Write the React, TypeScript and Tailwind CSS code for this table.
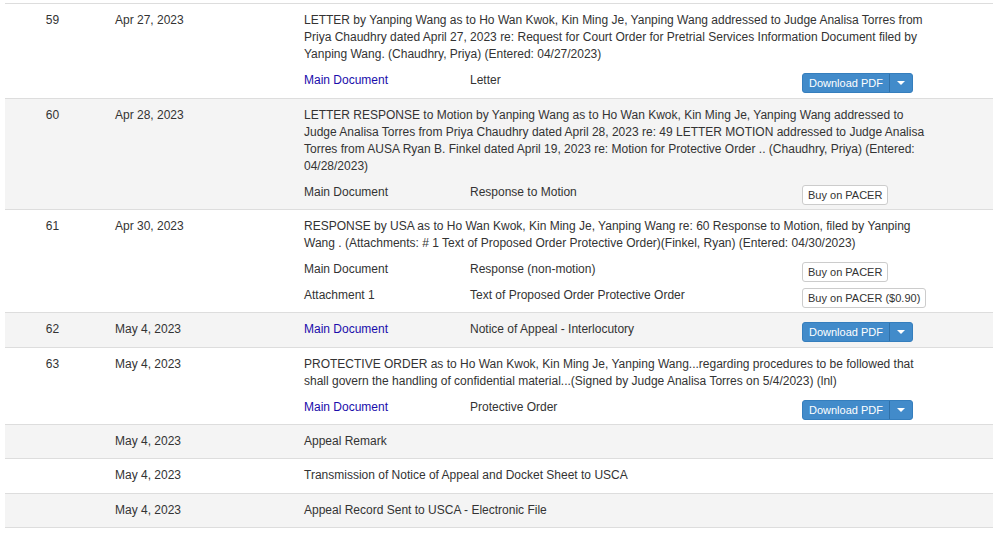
import React from 'react';

type Doc = {
  label: string;
  link?: boolean;
  desc: string;
  action: 'download' | 'buy' | 'buyPrice';
};

type Entry = {
  num?: string;
  date: string;
  text?: string;
  docs?: Doc[];
};

const entries: Entry[] = [
  {
    num: '59',
    date: 'Apr 27, 2023',
    text:
      'LETTER by Yanping Wang as to Ho Wan Kwok, Kin Ming Je, Yanping Wang addressed to Judge Analisa Torres from Priya Chaudhry dated April 27, 2023 re: Request for Court Order for Pretrial Services Information Document filed by Yanping Wang. (Chaudhry, Priya) (Entered: 04/27/2023)',
    docs: [{ label: 'Main Document', link: true, desc: 'Letter', action: 'download' }],
  },
  {
    num: '60',
    date: 'Apr 28, 2023',
    text:
      'LETTER RESPONSE to Motion by Yanping Wang as to Ho Wan Kwok, Kin Ming Je, Yanping Wang addressed to Judge Analisa Torres from Priya Chaudhry dated April 28, 2023 re: 49 LETTER MOTION addressed to Judge Analisa Torres from AUSA Ryan B. Finkel dated April 19, 2023 re: Motion for Protective Order .. (Chaudhry, Priya) (Entered: 04/28/2023)',
    docs: [{ label: 'Main Document', desc: 'Response to Motion', action: 'buy' }],
  },
  {
    num: '61',
    date: 'Apr 30, 2023',
    text:
      'RESPONSE by USA as to Ho Wan Kwok, Kin Ming Je, Yanping Wang re: 60 Response to Motion, filed by Yanping Wang . (Attachments: # 1 Text of Proposed Order Protective Order)(Finkel, Ryan) (Entered: 04/30/2023)',
    docs: [
      { label: 'Main Document', desc: 'Response (non-motion)', action: 'buy' },
      { label: 'Attachment 1', desc: 'Text of Proposed Order Protective Order', action: 'buyPrice' },
    ],
  },
  {
    num: '62',
    date: 'May 4, 2023',
    docs: [{ label: 'Main Document', link: true, desc: 'Notice of Appeal - Interlocutory', action: 'download' }],
  },
  {
    num: '63',
    date: 'May 4, 2023',
    text:
      'PROTECTIVE ORDER as to Ho Wan Kwok, Kin Ming Je, Yanping Wang...regarding procedures to be followed that shall govern the handling of confidential material...(Signed by Judge Analisa Torres on 5/4/2023) (lnl)',
    docs: [{ label: 'Main Document', link: true, desc: 'Protective Order', action: 'download' }],
  },
  { date: 'May 4, 2023', text: 'Appeal Remark' },
  { date: 'May 4, 2023', text: 'Transmission of Notice of Appeal and Docket Sheet to USCA' },
  { date: 'May 4, 2023', text: 'Appeal Record Sent to USCA - Electronic File' },
];

function DownloadButton() {
  return (
    <div className="mt-px flex h-5 rounded-[3px] border border-[#357ebd] bg-[#428bca] text-[11px] text-white">
      <span className="px-[6px] leading-[18px]">Download PDF</span>
      <span className="flex w-[23px] items-center justify-center border-l border-[#3071a9]">
        <span className="h-0 w-0 border-x-[4px] border-t-[4px] border-x-transparent border-t-white" />
      </span>
    </div>
  );
}

function BuyButton({ price }: { price?: string }) {
  return (
    <div className="mt-px h-5 rounded-[3px] border border-[#cccccc] bg-white px-[5px] text-[11px] leading-[18px] text-[#333333]">
      Buy on PACER{price ? ` (${price})` : ''}
    </div>
  );
}

function DocRow({ doc }: { doc: Doc }) {
  return (
    <div className="flex h-[25.5px] items-start">
      <span className={`w-[166px] ${doc.link ? 'text-[#1a0dab]' : ''}`}>{doc.label}</span>
      <span className="w-[332px]">{doc.desc}</span>
      {doc.action === 'download' && <DownloadButton />}
      {doc.action === 'buy' && <BuyButton />}
      {doc.action === 'buyPrice' && <BuyButton price="$0.90" />}
    </div>
  );
}

export default function App() {
  return (
    <div
      className="min-h-[539px] bg-white pt-[3px] pl-[5px] text-[12px] leading-[17px] text-[#333333]"
      style={{ fontFamily: '"Liberation Sans", Arial, sans-serif' }}
    >
      <div className="border-t border-[#dddddd]">
        {entries.map((e, i) => (
          <div
            key={i}
            className={`flex border-b border-[#dddddd] ${i % 2 === 1 ? 'bg-[#f4f4f4]' : 'bg-white'}`}
          >
            <div className="w-[95px] shrink-0 pt-2 text-center">{e.num}</div>
            <div className="w-[196px] shrink-0 pt-2 pl-[15px]">{e.date}</div>
            <div className={`flex-1 pt-2 pl-2 ${e.docs ? '' : 'pb-[8.3px]'}`}>
              {e.text && <p className="w-[630px]">{e.text}</p>}
              {e.docs && (
                <div className={e.text ? 'mt-[9px]' : ''}>
                  {e.docs.map((d, j) => (
                    <DocRow key={j} doc={d} />
                  ))}
                </div>
              )}
            </div>
          </div>
        ))}
      </div>
    </div>
  );
}
